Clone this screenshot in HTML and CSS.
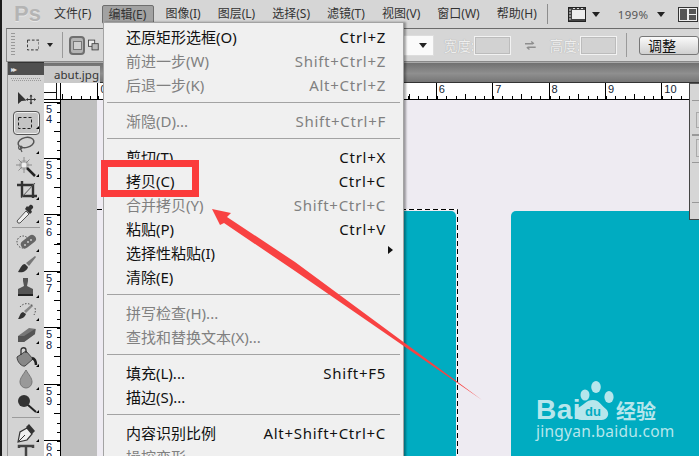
FILE: index.html
```html
<!DOCTYPE html>
<html lang="zh">
<head>
<meta charset="utf-8">
<title>Photoshop</title>
<link rel="stylesheet" href="styles.css">
</head>
<body>
<div class="app">
  <header class="menubar">
    <div class="ps-logo">Ps</div>
    <nav class="menus">
      <span class="menu-title">文件(F)</span>
      <span class="menu-title active">编辑(E)</span>
      <span class="menu-title">图像(I)</span>
      <span class="menu-title">图层(L)</span>
      <span class="menu-title">选择(S)</span>
      <span class="menu-title">滤镜(T)</span>
      <span class="menu-title">视图(V)</span>
      <span class="menu-title">窗口(W)</span>
      <span class="menu-title">帮助(H)</span>
    </nav>
    <div class="vsep"></div>
    <svg class="screen-icon" width="18" height="15" viewBox="0 0 18 15"><rect x="0.5" y="0.5" width="17" height="14" fill="#444" stroke="#222"/><rect x="4" y="3" width="13" height="9" fill="#eee"/><path d="M1 3h2M1 6h2M1 9h2M1 12h2M5 1.500h2M9 1.500h2M13 1.500h2" stroke="#ddd"/></svg>
    <i class="tri tri-bar"></i>
    <span class="zoom-level">199%</span>
    <i class="tri tri-zoom"></i>
    <svg class="layout-icon" width="20" height="15" viewBox="0 0 20 15"><rect x="0.5" y="0.5" width="19" height="14" fill="#eee" stroke="#333"/><rect x="2" y="2" width="7" height="11" fill="#555"/><rect x="11" y="2" width="7" height="5" fill="#555"/><rect x="11" y="8" width="7" height="5" fill="#555"/></svg>
  </header>

  <section class="options">
    <div class="grip"></div>
    <svg class="marquee-opt" width="14" height="12" viewBox="0 0 14 12"><rect x="0.500" y="0.500" width="13" height="11" fill="none" stroke="#222" stroke-dasharray="3 2"/></svg>
    <i class="tri tri-opt"></i>
    <div class="opt-sep"></div>
    <div class="mode-btn"><span class="mode-square"></span></div>
    <svg class="mode-add" width="12" height="12" viewBox="0 0 12 12"><rect x="0.500" y="0.500" width="7" height="7" fill="#eee" stroke="#444"/><rect x="4.500" y="4.500" width="7" height="7" fill="#bbb" stroke="#444"/></svg>
    <div class="opt-spacer"></div>
    <div class="select"><i class="tri"></i></div>
    <span class="opt-label">宽度:</span>
    <div class="opt-input"></div>
    <svg class="swap" width="12" height="11" viewBox="0 0 12 11"><path d="M0 3.500h9M7 1l3 2.500M12 7.500H3M5 10L2 7.500" stroke="#8e8e8e" stroke-width="1.500" fill="none"/></svg>
    <span class="opt-label second">高度:</span>
    <div class="opt-input"></div>
    <div class="opt-sep right"></div>
    <div class="opt-button">调整</div>
  </section>

  <main class="workspace">
    <aside class="toolbox">
      <div class="tool-head"><span class="chev">▸▸</span></div>
      <div class="tool-grip"></div>
      <div class="tool"><svg viewBox="0 0 36 23"><path d="M10 5v12l3.500-3 5-.5z" fill="#333"/><path d="M23 8v9M18.500 12.500h9" stroke="#333" stroke-width="1.200"/><path d="M21.500 9.500L23 7.500l1.500 2zM21.500 15.500l1.500 2 1.500-2zM20 11l-2 1.500 2 1.500zM26 11l2 1.500-2 1.500z" fill="#333"/></svg></div>
      <div class="tool selected"><svg viewBox="0 0 36 23"><rect x="10.500" y="6.500" width="13" height="11" fill="none" stroke="#222" stroke-dasharray="3 2"/><path d="M31 18v-3l-3 3z" fill="#000"/></svg></div>
      <div class="tool sub"><svg viewBox="0 0 36 23"><ellipse cx="18" cy="9.500" rx="8" ry="5" fill="none" stroke="#555" stroke-width="1.500" transform="rotate(-12 18 9.500)"/><path d="M11 13c-1 2 0 4 2 3s1-3 0-3c-1 1 0 4 1 6" fill="none" stroke="#555" stroke-width="1.200"/></svg></div>
      <div class="tool sub"><svg viewBox="0 0 36 23"><circle cx="16" cy="9" r="5" fill="#b4b4b4"/><path d="M16 1v16M8 9h16M10.500 3.500l11 11M21.500 3.500l-11 11" stroke="#8c8c8c" stroke-width="1"/><circle cx="16" cy="9" r="2.500" fill="#eee"/><path d="M19 12l8 8" stroke="#222" stroke-width="2.500"/></svg></div>
      <div class="tool sub"><svg viewBox="0 0 36 23"><path d="M9 6h16v13M14 2v15h15" fill="none" stroke="#333" stroke-width="2.400"/><path d="M13 19L27 4" stroke="#555" stroke-width="1"/></svg></div>
      <div class="tool sub"><svg viewBox="0 0 36 23"><path d="M10 21l-1-2 9-10 3 3-9 9z" fill="#eee" stroke="#555"/><path d="M17 7l5 5 2-2-1-2 2-2c1-2-2-4-3-3l-2 2-1-1z" fill="#333"/></svg></div>
      <div class="tool-sep"></div>
      <div class="tool sub"><svg viewBox="0 0 36 23"><circle cx="15" cy="11" r="6" fill="none" stroke="#444" stroke-dasharray="1.500 1.500"/><rect x="12" y="7" width="17" height="8" rx="4" fill="#666" transform="rotate(-38 20 11)"/><circle cx="20" cy="11" r="1" fill="#ccc"/><circle cx="23" cy="9" r="1" fill="#ccc"/><circle cx="17" cy="14" r="1" fill="#ccc"/></svg></div>
      <div class="tool sub"><svg viewBox="0 0 36 23"><path d="M10 18c5 1 9-1 10-5l-3-3c-3 0-4 3-7 8z" fill="#333"/><path d="M18 9l9-7 1 1-7 9z" fill="#777"/></svg></div>
      <div class="tool sub"><svg viewBox="0 0 36 23"><path d="M15 1h5v3l-1 5 6 3v5H10v-5l6-3-1-5z" fill="#555"/><rect x="10" y="17" width="15" height="2" fill="#222"/></svg></div>
      <div class="tool sub"><svg viewBox="0 0 36 23"><path d="M10 19c4 0 7-2 8-5l-3-2c-3 1-3 4-5 7z" fill="#333"/><path d="M16 11l8-7 1 2-7 7z" fill="#888"/><path d="M12 7c3-4 10-5 13 0M27 8c1 3 0 5-1 7" fill="none" stroke="#555" stroke-dasharray="1.500 1.500"/></svg></div>
      <div class="tool sub"><svg viewBox="0 0 36 23"><path d="M10 13L21 5l7 1-1 5-11 8h-6z" fill="#777"/><path d="M10 13h6v6h-6zM16 13L27 6v5l-11 8z" fill="#555"/></svg></div>
      <div class="tool sub"><svg viewBox="0 0 36 23"><path d="M9 11l9-6 7 8-8 7c-3 1-8-4-8-9z" fill="#888" stroke="#444"/><path d="M13 9V4c0-3 5-3 5 0v3" fill="none" stroke="#333" stroke-width="1.300"/><path d="M24 12c3 1 4 4 4 7" fill="none" stroke="#222" stroke-width="2.500"/></svg></div>
      <div class="tool sub"><svg viewBox="0 0 36 23"><path d="M18 1c3 5 6 8 6 12a6 6 0 0 1-12 0c0-4 3-7 6-12z" fill="#999" stroke="#777"/></svg></div>
      <div class="tool sub"><svg viewBox="0 0 36 23"><circle cx="16" cy="9" r="6" fill="#333"/><path d="M20 13l8 7" stroke="#222" stroke-width="2"/></svg></div>
      <div class="tool-sep"></div>
      <div class="tool sub"><svg viewBox="0 0 36 23"><path d="M10 21l2-10 7-4 5 6-5 6z" fill="#f0f0f0" stroke="#333" stroke-width="1.200"/><path d="M11 20l6-6" stroke="#333"/><path d="M18 6l3-3 6 7-3 3z" fill="#333"/></svg></div>
      <div class="tool"><svg viewBox="0 0 36 23"><path d="M11 4V2h14v2M18 2v19M15 21h6" fill="none" stroke="#444" stroke-width="2.500"/></svg></div>
    </aside>

    <div class="document">
      <div class="tabs"><div class="tab">abut.jpg</div></div>
      <div class="h-ruler">
        <div class="corner"></div>
        <div class="h-stub"></div>
        <div class="h-seg">0</div><div class="h-seg"></div><div class="h-seg"></div><div class="h-seg"></div><div class="h-seg"></div><div class="h-seg"></div><div class="h-seg">6</div><div class="h-seg">7</div><div class="h-seg">8</div><div class="h-seg">9</div><div class="h-seg">10</div>
      </div>
      <div class="view">
        <div class="v-ruler">
          <div class="v-stub"></div>
          <div class="v-seg"><span>5</span><span>4</span></div>
          <div class="v-seg"><span>5</span><span>5</span></div>
          <div class="v-seg"><span>5</span><span>6</span></div>
          <div class="v-seg"><span>5</span><span>7</span></div>
          <div class="v-seg"><span>5</span><span>8</span></div>
          <div class="v-seg"><span>5</span><span>9</span></div>
          <div class="v-seg"><span>6</span><span>0</span></div>
        </div>
        <div class="pasteboard"></div>
        <div class="canvas">
          <div class="card card-left"></div>
          <svg class="ants" width="362" height="250" viewBox="0 0 362 250"><path d="M0 .5h360.500V250" fill="none" stroke="#fff"/><path d="M0 .5h360.500V250" fill="none" stroke="#000" stroke-dasharray="5 3"/></svg>
          <div class="card card-right"></div>
          <div class="watermark">
            <div class="wm-row">
              <span class="wm-bai">Bai</span>
              <svg class="wm-paw" width="44" height="42" viewBox="0 0 44 42"><ellipse cx="25" cy="7" rx="4.800" ry="6" fill="#b6e6ec"/><ellipse cx="14" cy="15" rx="4.500" ry="5.500" fill="#b6e6ec"/><ellipse cx="38" cy="17" rx="4.600" ry="6" fill="#b6e6ec"/><path d="M22 20c6 0 8 5 13 9 5 5 1 12-6 11H12C4 41 1 33 7 28c6-3 8-8 15-8z" fill="#b6e6ec"/><text x="22" y="36" class="wm-du" text-anchor="middle">du</text></svg>
              <span class="wm-cn">经验</span>
            </div>
            <div class="wm-url">jingyan.baidu.com</div>
          </div>
        </div>
      </div>
    </div>
  </main>

  <aside class="side-panel">
    <div class="panel-line a"></div>
    <div class="panel-box"></div>
    <div class="panel-line b"></div>
    <div class="panel-box low"></div>
    <div class="panel-line c"></div>
    <div class="panel-line d"></div>
  </aside>

  <div class="dropdown">
    <div class="row"><span>还原矩形选框(O)</span><span class="key">Ctrl+Z</span></div>
    <div class="row off"><span>前进一步(W)</span><span class="key">Shift+Ctrl+Z</span></div>
    <div class="row off"><span>后退一步(K)</span><span class="key">Alt+Ctrl+Z</span></div>
    <div class="sep"></div>
    <div class="row off"><span>渐隐(D)...</span><span class="key">Shift+Ctrl+F</span></div>
    <div class="sep"></div>
    <div class="row"><span>剪切(T)</span><span class="key">Ctrl+X</span></div>
    <div class="row"><span>拷贝(C)</span><span class="key">Ctrl+C</span></div>
    <div class="row off"><span>合并拷贝(Y)</span><span class="key">Shift+Ctrl+C</span></div>
    <div class="row"><span>粘贴(P)</span><span class="key">Ctrl+V</span></div>
    <div class="row has-sub"><span>选择性粘贴(I)</span><i class="sub-arrow"></i></div>
    <div class="row"><span>清除(E)</span></div>
    <div class="sep"></div>
    <div class="row off"><span>拼写检查(H)...</span></div>
    <div class="row off"><span>查找和替换文本(X)...</span></div>
    <div class="sep"></div>
    <div class="row"><span>填充(L)...</span><span class="key">Shift+F5</span></div>
    <div class="row"><span>描边(S)...</span></div>
    <div class="sep"></div>
    <div class="row"><span>内容识别比例</span><span class="key">Alt+Shift+Ctrl+C</span></div>
    <div class="row off"><span>操控变形</span></div>
  </div>

  <div class="highlight-box"></div>
  <svg class="arrow" width="699" height="456" viewBox="0 0 699 456"><path d="M212 209L231 213 227 217 295 262 482 400 295 271 224 223 220 225z" fill="#f84242"/></svg>
</div>
</body>
</html>
```

FILE: styles.css
```css
* { box-sizing: border-box; }
html, body { margin: 0; padding: 0; background: #d4d4d4; }
body { width: 699px; height: 456px; overflow: hidden; }
.app {
  position: relative; width: 699px; height: 456px; overflow: hidden;
  background: #d5d5d5; border-left: 2px solid #1c1c1c;
  font-family: "Noto Sans", "Noto Sans CJK SC", sans-serif; color: #222;
}
.tri { display: block; width: 0; height: 0; border-left: 4px solid transparent; border-right: 4px solid transparent; border-top: 5px solid #222; }

.menubar { display: flex; align-items: center; height: 28px; background: #d6d6d6; }
.ps-logo { width: 46px; padding-left: 12px; font: bold 22px "Liberation Sans", sans-serif; color: #b4b4b4; text-shadow: 0 1px 0 #e6e6e6; }
.menus { display: flex; gap: 5px; font-size: 12px; line-height: 18px; }
.menu-title { padding: 0 6px; height: 18px; white-space: nowrap; color: #333; }
.menu-title.active { background: #a2a2a2; border: 1px solid #6e6e6e; border-radius: 2px; padding: 0 5px; width: 52px; height: 19px; line-height: 17px; }
.vsep { width: 1px; height: 20px; background: #8d8d8d; margin-left: 4px; }
.screen-icon { margin-left: 20px; }
.tri-bar { margin-left: 6px; }
.zoom-level { margin-left: 18px; font-size: 11.500px; color: #555; letter-spacing: .3px; }
.tri-zoom { margin-left: 9px; }
.layout-icon { margin-left: 13px; flex: none; }

.options {
  display: flex; align-items: center; height: 34px; margin-left: 4px;
  background: #d6d6d6; border: 1px solid #888; border-right: 0; border-top-color: #6b6b6b;
}
.grip { width: 4px; height: 24px; margin-left: 4px; background: repeating-linear-gradient(#999 0 1px, transparent 1px 3px); }
.marquee-opt { margin-left: 12px; }
.tri-opt { margin-left: 8px; border-width: 4px 3px 0; }
.opt-sep { width: 1px; height: 26px; background: #9a9a9a; margin-left: 9px; }
.opt-sep.right { margin-left: 9px; height: 24px; }
.mode-btn { display: flex; align-items: center; justify-content: center; width: 18px; height: 19px; margin-left: 6px; border: 2px solid #6f6f6f; border-radius: 4px; background: #b4b4b4; }
.mode-square { width: 9px; height: 9px; background: #cfcfcf; border: 1px solid #777; }
.mode-add { margin-left: 3px; }
.opt-spacer { width: 326px; }
.select { display: flex; align-items: center; justify-content: flex-end; width: 49px; height: 21px; padding-right: 6px; background: #fafafa; border: 1px solid #ddd; }
.opt-label { margin-left: 10px; font-size: 13.500px; color: #efefef; text-shadow: 0 0 1px #999; white-space: nowrap; width: 31px; }
.opt-label.second { margin-left: 14px; }
.opt-input { width: 41px; height: 19px; background: #d2d2d2; border: 1px solid #f2f2f2; box-shadow: inset 0 0 0 1px #bcbcbc; }
.swap { margin-left: 14px; }
.opt-button { margin-left: 12px; flex: none; width: 60px; height: 19px; padding-left: 8px; font-size: 14px; line-height: 17px; color: #111; border: 1px solid #777; border-radius: 3px; background: linear-gradient(#fafafa, #d0d0d0); }

.workspace { display: flex; height: 394px; margin-left: 5px; }
.toolbox { width: 37px; flex: none; background: #d3d3d3; border-left: 1px solid #999; }
.tool-head { height: 13px; background: #4f4f4f; padding-left: 3px; border-top: 1px solid #333; }
.chev { display: block; color: #ddd; font-size: 8px; line-height: 11px; letter-spacing: -2px; }
.tool-grip { height: 12px; margin: 0 3px; background: linear-gradient(90deg, #999 50%, transparent 50%) 0 3px / 2px 1px repeat-x, linear-gradient(90deg, #999 50%, transparent 50%) 1px 5px / 2px 1px repeat-x; }
.tool { position: relative; height: 23px; }
.tool svg { display: block; width: 36px; height: 23px; }
.tool.selected { margin: 1px 0 -1px; }
.tool.selected::before { content: ""; position: absolute; left: 5px; top: 0; width: 25px; height: 22px; border: 1px solid #555; border-radius: 4px; background: #c4c4c4; box-shadow: inset 0 0 0 1px #eee; }
.tool.selected svg { position: relative; }
.tool.sub::after { content: ""; position: absolute; right: 5px; bottom: 2px; border-style: solid; border-width: 0 0 3px 3px; border-color: transparent transparent #000 transparent; }
.tool-sep { height: 1px; margin: 2px 4px 3px; background: #9c9c9c; }

.document { flex: 1; min-width: 0; display: flex; flex-direction: column; }
.tabs { height: 21px; padding-top: 3px; background: linear-gradient(#707070, #8f8f8f 55%, #767676); border-top: 1px solid #aaa; border-bottom: 1px solid #333; }
.tab { width: 56px; height: 17px; background: #c9c9c9; color: #333; font-size: 11.500px; line-height: 17px; padding-left: 10px; }
.h-ruler { display: flex; height: 17px; background: #fff; border-bottom: 1px solid #000; color: #123; overflow: hidden; }
.corner { flex: none; width: 17px; border-right: 1px solid #000; background: linear-gradient(#111, #111) 0 9px / 13px 1px no-repeat, linear-gradient(#111, #111) 12px 0 / 1px 16px no-repeat; }
.h-stub, .h-seg { flex: none; background:
  repeating-linear-gradient(90deg, #000 0 1px, transparent 1px 9.400px) 0 100% / 100% 3px no-repeat,
  linear-gradient(#000, #000) 28.200px 100% / 1px 5px no-repeat; }
.h-stub { width: 36.400px; background-position: 1px 100%; }
.h-seg { width: 56.400px; border-left: 1px solid #000; padding-left: 2px; font: 11px/13px "Liberation Sans", sans-serif; }
.view { position: relative; flex: 1; display: flex; min-height: 0; }
.v-ruler { flex: none; width: 17px; height: 373px; background: #fff; border-right: 1px solid #000; color: #124; overflow: hidden; }
.v-stub { height: 1.600px; }
.v-seg { display: flex; flex-direction: column; height: 56.400px; padding: 1px 0 0 2px; border-top: 1px solid #000; font: 11px/10.500px "Liberation Sans", sans-serif; background:
  repeating-linear-gradient(#000 0 1px, transparent 1px 9.400px) 100% 0 / 3px 100% no-repeat,
  linear-gradient(#000, #000) 100% 28.200px / 6px 1px no-repeat; }
.pasteboard { flex: none; width: 36px; background: #bfbfbf; }
.canvas { position: relative; flex: 1; background: #eeebf2; }
.card { position: absolute; background: #00acc1; top: 111px; bottom: 0; }
.card-left { left: 20px; width: 339px; border-top-right-radius: 5px; }
.card-right { left: 414px; right: -10px; border-top-left-radius: 5px; }
.ants { position: absolute; left: 0; top: 109px; }

.watermark { position: absolute; left: 439px; top: 280px; width: 128px; color: #b6e6ec; }
.wm-row { display: flex; align-items: flex-end; height: 42px; }
.wm-bai { font: bold 28px/28px "Liberation Sans", sans-serif; letter-spacing: .5px; margin-bottom: -2px; }
.wm-paw { margin-left: -10px; flex: none; margin-right: -8px; }
.wm-du { font: bold 13px "Liberation Sans", sans-serif; fill: #00acc1; }
.wm-cn { font: bold 20px/24px "Noto Sans CJK SC", sans-serif; margin-left: 9px; margin-bottom: -1px; white-space: nowrap; }
.wm-url { font: 15.500px/18px "Noto Sans", sans-serif; letter-spacing: .25px; white-space: nowrap; }

.side-panel { position: absolute; left: 687px; top: 83px; width: 12px; height: 137px; background: #d6d6d6; border-left: 1px solid #444; border-bottom: 1px solid #444; border-top: 1px solid #555; }
.panel-line { position: absolute; left: 2px; right: 0; height: 1px; background: #999; }
.panel-line.a { top: 16px; }
.panel-line.b { top: 50px; height: 2px; }
.panel-line.c { top: 78px; }
.panel-line.d { top: 118px; }
.panel-box { position: absolute; left: 6px; right: 0; top: 28px; height: 16px; border: 1px solid #aaa; border-right: 0; }
.panel-box.low { top: 55px; height: 18px; }

.dropdown {
  position: absolute; left: 101px; top: 22px; width: 301px; height: 440px; padding: 2px 3px 0 3px;
  background: #f0f0f0; border: 1px solid #a3a3a3; box-shadow: 2px 0 2px rgba(0,0,0,.35);
  font-size: 15px; color: #111; z-index: 2;
}
.row { display: flex; justify-content: space-between; align-items: center; height: 24px; padding: 0 15px 0 19px; white-space: nowrap; line-height: 22px; }
.row.off { color: #808080; }
.key { letter-spacing: .72px; margin-right: -1px; }
.has-sub { position: relative; }
.sub-arrow { position: absolute; right: 7px; top: 5px; border-style: solid; border-width: 4px 0 4px 5px; border-color: transparent transparent transparent #111; }
.sep { height: 1px; margin: 5px 0 6px; background: #a3a3a3; }

.highlight-box { position: absolute; left: 99px; top: 160px; width: 98px; height: 37px; border: 7px solid #fb3b3b; z-index: 3; }
.arrow { position: absolute; left: -2px; top: 0; z-index: 3; pointer-events: none; }
```
